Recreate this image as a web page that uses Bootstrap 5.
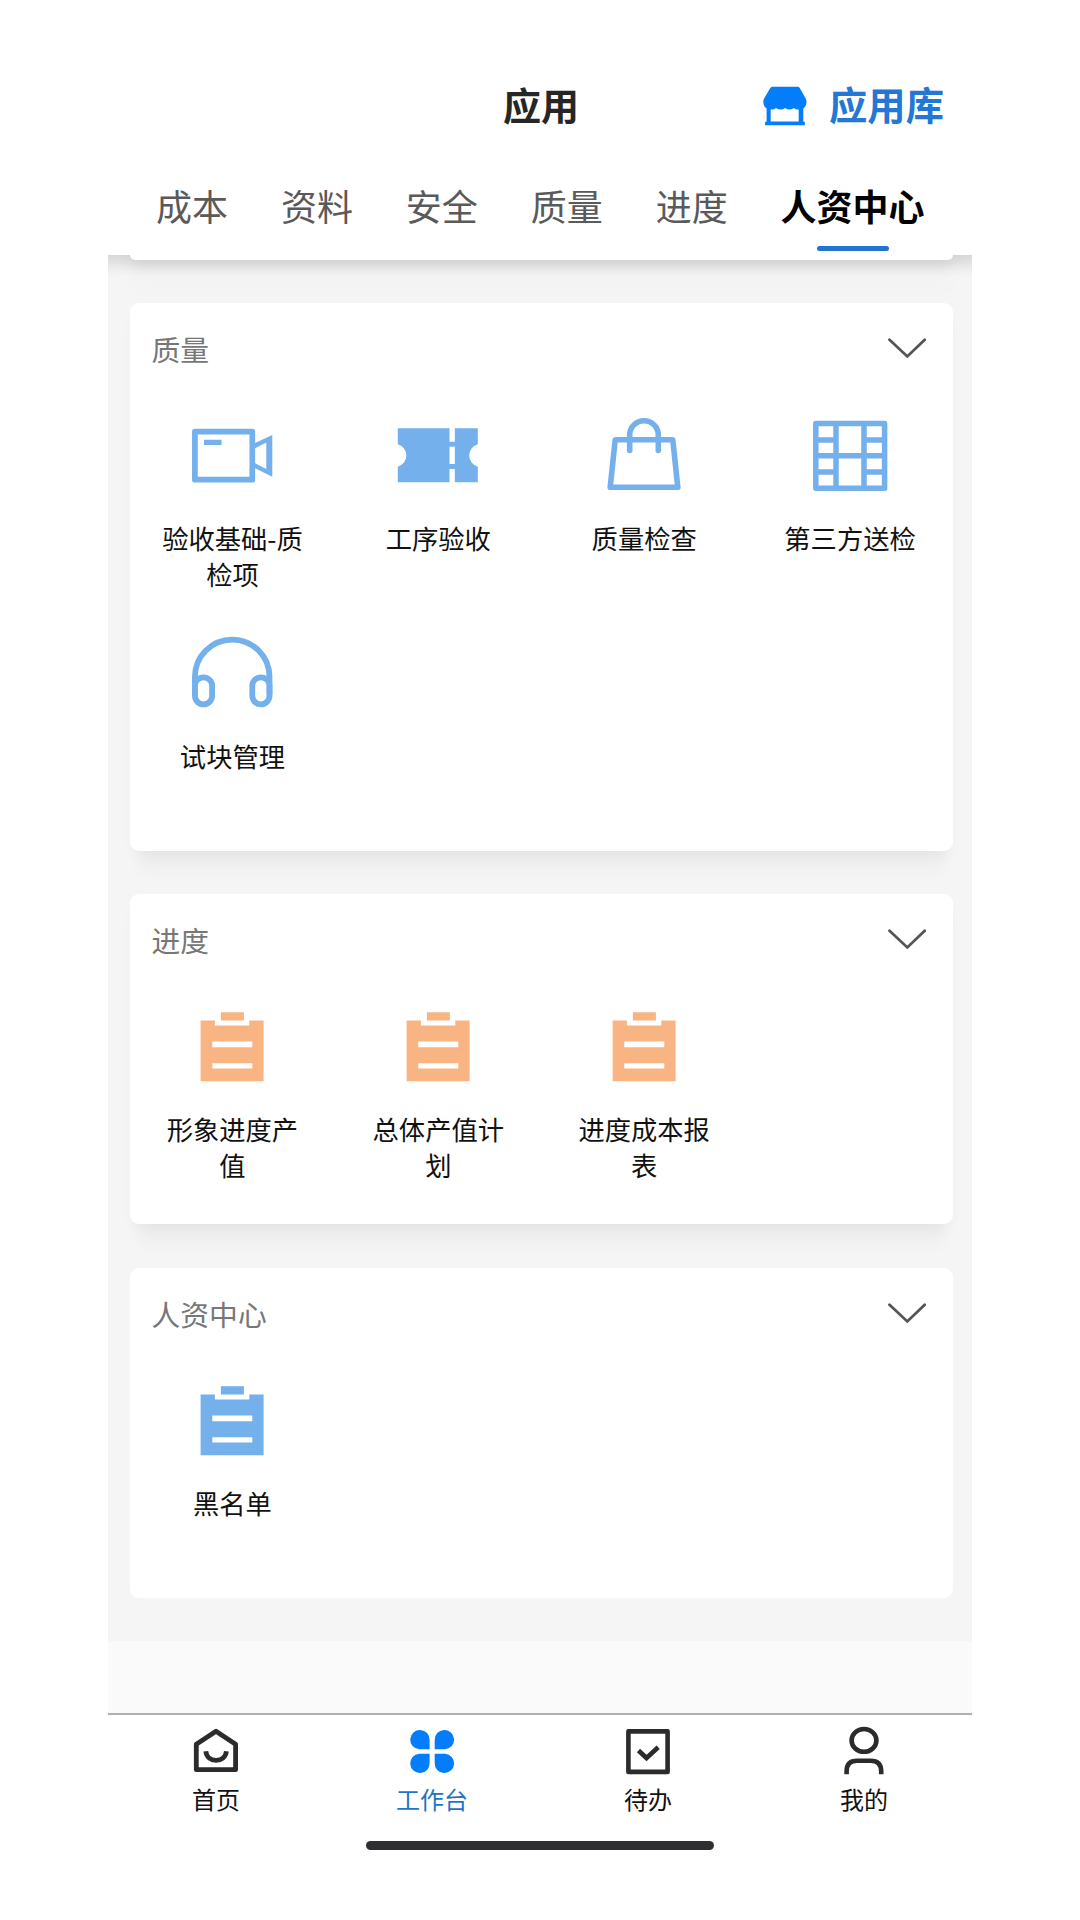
<!DOCTYPE html>
<html lang="zh-CN">
<head>
<meta charset="utf-8">
<meta name="viewport" content="width=device-width, initial-scale=1">
<title>应用</title>
<link href="https://cdn.jsdelivr.net/npm/bootstrap@5.3.0/dist/css/bootstrap.min.css" rel="stylesheet">
<style>
  body { font-family: "Noto Sans CJK SC", sans-serif; background: #fff; color: #111; }
  .phone { width: 864px; height: 1920px; }
  .topbar { height: 87px; margin-top: 61px; font-size: 38.3px; line-height: 1; font-weight: 700; }
  .topbar .title { color: #262626; font-size: 38px; padding-left: 2px; padding-bottom: 2px; }
  .library { color: #2477d4; gap: 22px; padding-right: 28px; padding-top: 3px; }
  .library span { padding-bottom: 3px; }
  .tabs { height: 107px; padding-left: 48px; gap: 52.9px; font-size: 36px; line-height: 50px; color: #5a5a5a; font-weight: 400; }
  .tabs a { color: inherit; padding-top: 32px; white-space: nowrap; }
  .tabs .current { color: #000; font-weight: 700; }
  .tabs .current::after { content: ""; width: 72px; height: 5px; margin-top: 16px; border-radius: 3px; background: #2174d0; }
  .board { background: #f5f5f5; padding: 0 19px 0 21.5px; height: 1386px; overflow: hidden; box-shadow: inset 0 20px 16px -12px rgba(0,0,0,.14); }
  .sheet { background: #fff; border-radius: 9px; margin-bottom: 43.5px; box-shadow: 0 10px 16px -6px rgba(0,0,0,.06), 0 30px 14px -8px rgba(0,0,0,.025); }
  .sheet.stub { height: 4.5px; margin-bottom: 43px; border-radius: 0 0 9px 9px; box-shadow: 0 3px 16px rgba(0,0,0,.2), 0 26px 20px 2px rgba(0,0,0,.025); }
  .sheet:last-child { margin-bottom: 0; box-shadow: none; }
  .sheet-head { height: 94px; padding: 0 27px 2px 22px; font-size: 28.8px; line-height: 36px; color: #777; }
  .tiles { padding-top: 18px; }
  .tile { height: 218px; color: #74b0ec; }
  .tile svg { width: 82px; height: 82px; }
  .tile span { width: 150px; margin-top: 23px; font-size: 26.3px; line-height: 36px; color: #111; text-align: center; word-break: break-all; }
  .orange { color: #f8b583; }
  .filler { height: 72px; background: #fafafa; }
  .bottomnav { border-top: 2px solid #b0b0b0; height: 128px; padding-top: 11px; font-size: 24px; line-height: 36px; }
  .bottomnav a { color: #111; }
  .bottomnav svg { width: 50px; height: 50px; color: #2b2b2b; margin-bottom: 5px; }
  .bottomnav .current { color: #1f74c4; }
  .bottomnav .current svg { color: #047dfb; }
  .homebar { width: 348px; height: 9px; border-radius: 5px; background: #2f2f31; }
</style>
</head>
<body>
<svg class="d-none" xmlns="http://www.w3.org/2000/svg">
  <symbol id="clipboard" viewBox="0 0 82 82"><path fill="currentColor" fill-rule="evenodd" d="M29.900 6.200h23v8.300h-23zM9.600 14.500h14.300v5h34.400v-5h14.300v60.700h-63zM21.300 35.500v5.700h40v-5.700zM21.300 57.200v5.300h40v-5.300z"/></symbol>
  <symbol id="chevron" viewBox="0 0 38 22"><path d="M1.500 1.800 19.300 18.400 36.700 1.800" fill="none" stroke="#555" stroke-width="2.800" stroke-linecap="round"/></symbol>
</svg>
<div class="phone mx-auto d-flex flex-column overflow-hidden">
  <header>
    <div class="topbar d-flex align-items-center">
      <div class="col-4"></div>
      <div class="title col-4 text-center">应用</div>
      <a class="library col-4 d-flex align-items-center justify-content-end text-decoration-none" href="#">
        <svg width="44" height="40" viewBox="0 0 44 40"><path fill="#047dfb" fill-rule="evenodd" d="M9.500.8h25.200q1.300 0 2 1.200l6 10.400q.9 1.600.8 3.600-.2 4.200-3.200 6.400v13.300h1.500v3.600H2.100v-3.600h1.500V22.400Q.4 20.100.3 16q-.1-2 .8-3.600L7.300 2Q8.100.8 9.500.8zM7.700 23.500v12h28v-12q-2.600.4-4.800-1.600-4.300 3-8.800 0-4.600 3-9 0-2.400 2.100-5.400 1.600z"/></svg>
        <span>应用库</span>
      </a>
    </div>
    <nav class="tabs d-flex">
      <a class="text-decoration-none" href="#">成本</a>
      <a class="text-decoration-none" href="#">资料</a>
      <a class="text-decoration-none" href="#">安全</a>
      <a class="text-decoration-none" href="#">质量</a>
      <a class="text-decoration-none" href="#">进度</a>
      <a class="current d-flex flex-column align-items-center text-decoration-none" href="#">人资中心</a>
    </nav>
  </header>

  <main class="board flex-shrink-0">
    <div class="sheet stub"></div>

    <section class="sheet">
      <div class="sheet-head d-flex justify-content-between align-items-center"><span>质量</span><svg width="38" height="22"><use href="#chevron"/></svg></div>
      <div class="tiles row g-0">
        <div class="tile col-3 d-flex flex-column align-items-center">
          <svg viewBox="0 0 82 82"><path d="M3.900 16.700h57.400v48H3.900z" fill="none" stroke="currentColor" stroke-width="5.700" stroke-linejoin="round"/><path fill="currentColor" fill-rule="evenodd" d="M13 24.700h17.600V30H13zM63.600 28.300 81.300 20v41.700L63.600 53zM63.600 33.500V48l11.700 6V27.500z"/></svg>
          <span>验收基础-质检项</span>
        </div>
        <div class="tile col-3 d-flex flex-column align-items-center">
          <svg viewBox="0 0 82 82"><path fill="currentColor" d="M.8 13.300h51.700v13.400h5.300V13.300h23v16a11.600 11.600 0 0 0 0 22.400v15.600h-23V54h-5.300v13.300H.8V51.700a11.600 11.600 0 0 0 0-22.400z"/><path fill="#fff" d="M52.500 31.700h5.300V49h-5.300z"/></svg>
          <span>工序验收</span>
        </div>
        <div class="tile col-3 d-flex flex-column align-items-center">
          <svg viewBox="0 0 82 82"><g fill="none" stroke="currentColor" stroke-width="5.600" stroke-linejoin="round" stroke-linecap="round"><path d="M12.200 24.700h57.600l5 47.600H7.200z"/><path d="M26.700 35.500V20a14.300 14.300 0 0 1 28.600 0v15.500"/></g></svg>
          <span>质量检查</span>
        </div>
        <div class="tile col-3 d-flex flex-column align-items-center">
          <svg viewBox="0 0 82 82"><path fill="none" stroke="currentColor" stroke-width="5.500" stroke-linejoin="round" d="M6.800 8.500h68.800v64.800H6.800zM27 8.500v64.800M55 8.500v64.800M27 40.700h28M6.800 24.900H27M6.800 40.700H27M6.800 56.900H27M55 24.900h20.600M55 40.700h20.600M55 56.900h20.600"/></svg>
          <span>第三方送检</span>
        </div>
        <div class="tile col-3 d-flex flex-column align-items-center">
          <svg viewBox="0 0 82 82"><g fill="none" stroke="currentColor" stroke-width="5.800"><path d="M3.900 62V43.900a37.300 37.300 0 0 1 74.600 0V62"/><rect x="3.900" y="44.300" width="17.200" height="27.100" rx="8.600"/><rect x="61.300" y="44.300" width="17.200" height="27.100" rx="8.600"/></g></svg>
          <span>试块管理</span>
        </div>
      </div>
    </section>

    <section class="sheet">
      <div class="sheet-head d-flex justify-content-between align-items-center"><span>进度</span><svg width="38" height="22"><use href="#chevron"/></svg></div>
      <div class="tiles row g-0">
        <div class="tile col-3 d-flex flex-column align-items-center"><svg class="orange"><use href="#clipboard"/></svg><span>形象进度产值</span></div>
        <div class="tile col-3 d-flex flex-column align-items-center"><svg class="orange"><use href="#clipboard"/></svg><span>总体产值计划</span></div>
        <div class="tile col-3 d-flex flex-column align-items-center"><svg class="orange"><use href="#clipboard"/></svg><span>进度成本报表</span></div>
      </div>
    </section>

    <section class="sheet">
      <div class="sheet-head d-flex justify-content-between align-items-center"><span>人资中心</span><svg width="38" height="22"><use href="#chevron"/></svg></div>
      <div class="tiles row g-0">
        <div class="tile col-3 d-flex flex-column align-items-center"><svg><use href="#clipboard"/></svg><span>黑名单</span></div>
      </div>
    </section>
  </main>
  <div class="filler flex-shrink-0"></div>

  <nav class="bottomnav d-flex flex-shrink-0">
    <a class="col-3 d-flex flex-column align-items-center text-decoration-none" href="#">
      <svg viewBox="0 0 50 50" fill="none" stroke="currentColor" stroke-width="4.800" stroke-linejoin="round"><path d="M5.300 18.200 25 5.200l19.600 13v25.500H5.300z"/><path d="M14.800 25.300c1.200 12.200 19.400 12.200 20.600 0"/></svg>首页</a>
    <a class="current col-3 d-flex flex-column align-items-center text-decoration-none" href="#">
      <svg viewBox="0 0 50 50" fill="currentColor"><path d="M22.600 23.300H12.200A9.700 9.700 0 1 1 22.600 14zM27.700 23.300h10.400A9.700 9.700 0 1 0 27.700 14zM22.600 27.700H12.200A9.700 9.700 0 1 0 22.600 37zM27.700 27.700h10.400A9.700 9.700 0 1 1 27.700 37z"/></svg>工作台</a>
    <a class="col-3 d-flex flex-column align-items-center text-decoration-none" href="#">
      <svg viewBox="0 0 50 50" fill="none" stroke="currentColor" stroke-width="4.600" stroke-linejoin="round"><path d="M5.400 5.400h39.200v40.500H5.400z"/><path stroke-linejoin="miter" d="m15.500 24.500 8 7.500 11.700-10.800"/></svg>待办</a>
    <a class="col-3 d-flex flex-column align-items-center text-decoration-none" href="#">
      <svg viewBox="0 0 50 50" fill="none" stroke="currentColor" stroke-width="4.600"><ellipse cx="25" cy="14.400" rx="12.400" ry="11.400"/><path d="M7.600 48.300v-3q0-10.600 10.400-10.600h13.600q10.600 0 10.600 10.600v3"/></svg>我的</a>
  </nav>
  <div class="homebar mx-auto flex-shrink-0"></div>
</div>
<script src="https://cdn.jsdelivr.net/npm/bootstrap@5.3.0/dist/js/bootstrap.bundle.min.js"></script>
</body>
</html>
